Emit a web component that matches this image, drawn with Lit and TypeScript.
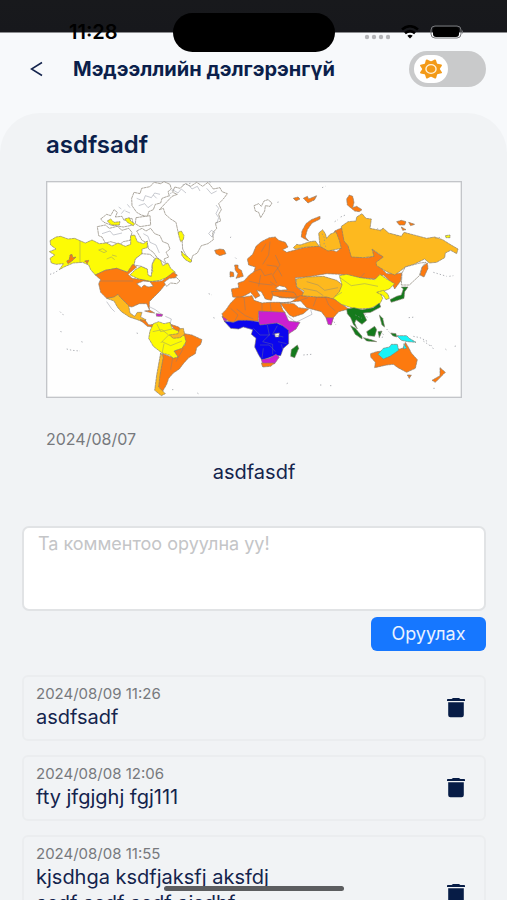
import { LitElement, html, css, svg } from "lit";
import { customElement, property } from "lit/decorators.js";

type Land = [fill: string, points: string];

const ORANGE = "#fd7a0f";
const GOLD = "#fdb91f";
const YELLOW = "#fdfb05";
const PURPLE = "#cb1fd0";
const BLUE = "#0b06ee";
const GREEN = "#147a1c";
const CYAN = "#17f3f6";
const WHITE = "#ffffff";

const lands: Land[] = [
  // Arctic islands and Greenland
  [WHITE, "275,70 282,52 300,56 305,40 330,35 342,22 362,26 372,20 390,28 394,42 384,50 388,62 366,70 362,84 346,88 340,104 326,110 322,125 304,120 290,112 276,92"],
  [WHITE, "288,128 330,122 332,150 300,155 286,146"],
  [WHITE, "182,132 200,118 212,122 222,104 232,112 226,126 246,124 252,136 276,130 280,150 250,156 212,150 192,142"],
  [WHITE, "172,155 196,150 208,160 232,154 246,166 266,160 276,172 270,196 250,200 240,208 212,200 196,204 186,186 176,182"],
  [WHITE, "290,168 306,160 318,168 332,160 344,176 360,182 368,200 384,206 390,222 378,232 386,246 372,252 380,268 362,256 350,246 340,232 326,222 322,204 306,196 298,182"],
  [WHITE, "358,104 370,100 376,118 392,132 408,142 414,170 426,190 428,222 440,244 452,262 458,242 472,234 484,212 504,206 520,194 518,174 530,160 526,144 542,138 536,118 544,104 536,86 550,72 562,56 546,50 540,38 520,42 504,22 488,34 470,22 452,34 436,26 420,40 404,36 398,52 412,58 396,64"],
  [YELLOW, "202,138 212,132 222,142 240,140 238,150 214,150"],
  [YELLOW, "254,132 268,128 272,138 284,146 280,152 262,142"],
  [YELLOW, "414,172 424,168 432,182 430,194 422,200 418,188"],
  [YELLOW, "424,228 432,238 444,246 456,258 450,262 436,254 426,242"],
  // North America
  [YELLOW, "30,197 48,186 62,184 84,192 104,190 120,197 136,204 156,195 178,206 200,204 216,213 234,204 256,214 272,208 272,182 284,180 292,200 310,206 322,198 322,218 306,222 306,238 288,250 284,266 264,292 230,280 196,286 166,300 152,284 146,270 128,262 100,264 72,276 58,284 70,266 48,268 34,264 30,250 44,240 28,230 48,222 32,210"],
  [YELLOW, "270,300 286,284 304,274 322,282 330,304 338,290 336,268 348,248 362,256 368,272 384,264 392,280 406,292 384,306 360,316 330,320 296,312"],
  [WHITE, "286,252 306,236 330,238 344,250 336,268 334,304 324,300 322,282 304,274 282,270"],
  [ORANGE, "166,300 196,286 230,280 262,292 278,268 290,276 264,298 276,310 306,314 336,320 366,318 400,292 412,300 400,316 376,328 360,348 342,366 328,380 328,404 320,386 298,386 276,396 266,394 252,378 234,368 200,370 182,352 176,326 182,314"],
  [ORANGE, "80,258 88,254 90,240 96,238 98,248 108,246 96,258 84,266"],
  [ORANGE, "134,258 146,256 142,266"],
  [WHITE, "290,326 310,318 330,320 340,334 324,336 312,330 304,338"],
  [GOLD, "200,370 222,366 234,358 240,366 266,392 270,414 284,424 292,412 306,412 302,426 318,434 312,442 292,434 268,426 244,410 232,396 222,378"],
  [ORANGE, "300,434 316,436 326,450 342,448 338,456 322,454"],
  [ORANGE, "314,408 330,406 344,414 328,412"],
  [PURPLE, "348,416 368,418 366,424 350,424"],
  [WHITE, "372,322 388,310 410,308 420,318 410,326 392,324 380,334"],
  // South America
  [ORANGE, "392,448 416,456 434,476 456,480 486,494 482,508 470,518 466,536 446,548 430,566 418,582 400,594 386,610 380,628 366,652 352,640 360,590 368,536 400,548 414,546 402,528 436,510"],
  [YELLOW, "340,446 356,440 372,446 390,442 396,460 420,470 434,484 438,500 426,520 402,528 414,546 400,550 388,540 366,534 340,514 326,490 330,468"],
  [GOLD, "388,480 414,476 418,462 430,460 434,478 420,488 400,490"],
  [GOLD, "362,534 370,546 360,600 356,636 376,656 364,662 344,646 350,600"],
  // Northern islands
  [ORANGE, "524,226 540,222 552,224 558,236 540,242 528,236"],
  [WHITE, "642,92 656,86 664,94 672,78 684,74 696,84 690,94 676,92 674,108 662,128 656,112 646,108"],
  [ORANGE, "760,70 774,66 780,72 768,78"],
  [ORANGE, "790,70 802,64 806,72 830,62 824,74 804,84"],
  [ORANGE, "784,186 786,168 798,146 814,134 840,124 840,132 816,144 802,164 796,186 806,198"],
  [ORANGE, "920,72 928,60 938,64 942,82 938,98 950,94 966,104 958,110 944,108 922,90"],
  [ORANGE, "1070,140 1084,136 1098,140 1094,150 1078,150"],
  [ORANGE, "1106,142 1124,148 1112,152"],
  [ORANGE, "1084,156 1098,164 1088,166"],
  [YELLOW, "1216,182 1230,180 1230,188 1218,188"],
  // Europe and Russia
  [ORANGE, "570,290 580,292 582,304 570,306"],
  [ORANGE, "584,270 594,270 594,280 604,286 610,304 588,310 594,296 586,286"],
  [ORANGE, "574,342 596,338 594,324 612,318 628,300 642,290 646,276 626,270 622,252 638,238 648,214 664,200 688,188 706,186 716,196 736,202 744,216 728,224 740,232 762,226 790,218 832,212 890,230 900,222 886,200 884,168 906,158 918,190 926,214 936,244 980,248 1000,244 996,222 1020,240 1032,242 1010,266 1040,296 1070,296 1086,294 1082,318 1064,342 1056,324 1030,300 1006,312 960,308 900,298 860,296 800,306 766,308 770,336 788,350 800,370 760,370 720,368 700,358 694,376 676,372 664,350 650,346 660,362 646,370 632,352 618,360 600,368 578,366"],
  [WHITE, "706,340 718,332 736,336 742,344 720,346"],
  [ORANGE, "694,350 724,348 762,352 772,366 740,368 700,362"],
  [GOLD, "760,218 770,208 780,210 810,200 826,198 838,214 800,216 766,222"],
  [GOLD, "836,174 848,164 856,176 860,190 870,178 888,170 898,196 904,220 864,228 840,214"],
  [GOLD, "904,154 924,140 948,138 950,126 966,116 978,130 994,132 990,160 1020,166 1030,160 1046,174 1084,184 1092,172 1130,182 1160,190 1184,186 1208,194 1230,208 1254,222 1250,236 1232,226 1216,234 1214,248 1190,262 1168,264 1154,252 1122,268 1096,276 1078,290 1064,300 1040,290 1010,272 1008,262 1030,246 996,222 1002,244 970,248 934,246 924,212 912,198"],
  [ORANGE, "1140,300 1146,276 1162,264 1164,280 1152,306"],
  [WHITE, "1086,294 1096,276 1140,264 1158,262 1146,276 1138,302 1108,330 1084,330"],
  // Asia
  [ORANGE, "718,384 752,382 780,362 840,366 880,366 912,392 926,402 896,410 880,428 872,450 858,428 844,410 800,398 782,378"],
  [ORANGE, "720,384 762,386 776,398 806,402 790,416 760,426 748,420 734,402"],
  [GOLD, "768,312 800,306 850,304 890,316 908,330 900,350 894,376 860,366 830,366 786,362 792,348 770,336"],
  [YELLOW, "898,302 920,298 960,308 1004,314 1020,298 1040,312 1064,326 1048,342 1020,352 1028,370 1020,386 992,400 946,402 904,388 880,370 898,350 906,330"],
  [YELLOW, "1010,352 1030,346 1044,358 1048,370 1038,374 1030,362"],
  [PURPLE, "858,428 880,428 874,450 864,448"],
  [GREEN, "920,402 942,398 966,404 1000,398 1018,384 1022,396 992,412 970,414 980,436 966,448 948,434 944,444 952,462 940,448 932,428 922,416"],
  [GREEN, "932,452 946,460 966,484 966,492 946,478"],
  [GREEN, "970,488 994,494 1010,500 980,498"],
  [GREEN, "980,470 1004,454 1010,464 1004,484 984,482"],
  [GREEN, "1018,420 1028,430 1034,456 1026,450"],
  [GREEN, "1014,470 1026,468 1018,488"],
  [GREEN, "1050,374 1070,364 1084,360 1090,342 1084,336 1104,336 1094,350 1092,370 1054,382"],
  [GREEN, "1052,474 1068,476 1070,486 1058,482"],
  [CYAN, "1070,482 1100,482 1108,490 1128,502 1104,500 1084,496"],
  // Africa
  [ORANGE, "550,430 546,416 558,404 572,384 590,366 612,366 636,362 642,376 666,384 690,382 720,382 728,404 736,414 732,414 656,410 654,438 620,438 572,442"],
  [PURPLE, "656,408 734,412 746,438 780,442 768,462 744,478 730,454 714,444 690,450 656,450"],
  [PURPLE, "546,424 562,434 554,440"],
  [BLUE, "552,438 580,442 596,436 624,436 656,440 660,450 710,444 728,452 746,466 746,506 730,520 722,542 704,542 666,556 656,540 644,516 648,490 634,478 638,464 610,456 596,462 572,460"],
  [WHITE, "704,476 718,474 716,486 706,486"],
  [PURPLE, "664,554 688,550 708,538 718,546 704,566 668,566"],
  [ORANGE, "664,564 704,564 692,574 668,576"],
  [GREEN, "754,524 772,510 776,520 764,548 752,544"],
  // Oceania
  [ORANGE, "992,536 1010,530 1050,526 1080,522 1092,518 1096,502 1106,518 1114,534 1132,554 1126,580 1100,592 1074,578 1060,568 1040,570 1004,578 1006,562 992,546"],
  [CYAN, "1014,538 1030,520 1048,516 1054,508 1072,508 1076,526 1050,544 1030,552"],
  [CYAN, "1090,522 1092,506 1100,520"],
  [ORANGE, "1102,600 1114,600 1108,610"],
  [ORANGE, "1200,578 1216,592 1186,622 1176,616 1200,602"],
];

// Borders, lakes and rivers
const borders = [
  "M120,197V262", "M178,318H280", "M176,225l12,-4 12,8 -8,4z", "M200,252l14,-6 10,8M216,240l14,4",
  "M290,70l20,8 6,-16 18,6 10,-14 16,4M296,92l18,-6 10,12 14,-10M340,60l10,10",
  "M244,116l10,-12M236,96l8,6M256,108l14,6M262,88l8,10M186,176l24,-8 10,12 26,-6M310,176l14,8 6,18 18,8 10,24",
  "M398,44l16,10 10,-12 14,12M446,30l10,12 16,-8 8,14M500,40l14,16 16,-8M528,90l8,10 -8,16 8,12 -6,18M506,176l8,-10 10,6 -8,14z",
  "M200,380l14,20 10,10M330,396l16,8 16,12M376,424l18,8 -4,16", "M338,470l28,-6 20,16 -24,24M366,500l26,12 34,-14M350,446l12,24 34,-8M372,506l-6,30M398,548l-6,36M430,520l-22,40",
  "M640,290l22,-8 12,20 22,-6M664,230l14,-24M690,200l-4,40 -18,28M706,240l14,30 -22,30 12,24M662,300l-6,34M680,270l30,4 16,30M626,318l32,8 40,4M690,320l20,14",
  "M590,402l26,20 24,10M612,366l4,40M666,384v30M690,382l4,28M572,400l22,20 -12,22",
  "M682,450l6,30 -20,20 30,8v30M712,452l-14,26 32,8M660,510h28l18,20M640,460l20,20h30M670,520l-4,30M714,500l26,6",
  "M724,508l4,14M800,320l34,10 20,16 40,-8M790,340l40,8 20,14M830,366l-10,28M856,366l10,24 20,18M780,376l24,-8",
  "M900,308l34,24 40,-6 40,8M960,308l14,-14M906,352l-20,12M736,418l32,24 48,-24 -4,-14",
];

// Scattered islets
const islets = [
  "M882,440l6,10M974,416l10,14M946,420l20,10M1020,470l10,8 -4,12M1040,462l8,10M1120,484l20,4 24,12M1172,510l10,14M1216,522l8,6M1244,514l8,-2M1150,498l20,14M1106,428l20,-2M1180,292l20,6 20,6M1228,304l12,-2",
  "M884,140l10,-6M902,126l14,-6M1012,160l10,8 8,-10M1070,184l6,-8M1186,190l20,-4M846,176l8,14 -2,20 10,8",
  "M30,298l12,-4 10,-6M570,188l6,-4M586,248l4,4M712,82l8,-2M508,20l6,4M60,410l8,8 4,2M62,468l2,4M124,500l6,2M80,522l16,4 24,2M290,474l6,2M396,644h8M472,654l6,4M520,428l6,2M506,356l10,4M870,632h8M1180,640h8M740,626l4,-2M790,540l24,-2M840,630h6",
  "M820,78l8,-16M846,38l10,-4M428,30l26,-6M398,44l-10,20M1106,608l8,2",
];

@customElement("world-map")
class WorldMap extends LitElement {
  static styles = css`
    :host { display: block; }
    svg { display: block; width: 100%; height: auto; }
    .sea { fill: #fefefe; stroke: #c3c5c9; stroke-width: 4; }
    .land { stroke: #857d70; stroke-width: 2; stroke-linejoin: round; stroke-dasharray: 9 1; }
    .border { fill: none; stroke: #777c8a; stroke-width: 2; opacity: 0.6; }
    .islet { fill: none; stroke: #8b8f96; stroke-width: 3; stroke-dasharray: 4 6; opacity: 0.7; }
  `;
  render() {
    return html`<svg viewBox="18 18 1248 651" role="img" aria-label="World map">
      <rect class="sea" x="20" y="20" width="1244" height="647"></rect>
      ${lands.map(([fill, points]) => svg`<polygon class="land" fill=${fill} points=${points}></polygon>`)}
      ${borders.map((d) => svg`<path class="border" d=${d}></path>`)}
      ${islets.map((d) => svg`<path class="islet" d=${d}></path>`)}
    </svg>`;
  }
}

@customElement("comment-card")
class CommentCard extends LitElement {
  @property() date = "";
  @property() text = "";
  static styles = css`
    :host {
      display: flex; align-items: center; justify-content: space-between; gap: 16px;
      padding: 7px 16px 9px 12px; border: 2px solid #ebedef; border-radius: 6px;
    }
    .body { max-width: 260px; }
    time { display: block; font-size: 15px; line-height: 20px; color: #77797d; }
    p { margin: 0; font-size: 20px; line-height: 26px; color: #14244d; white-space: pre-wrap; }
    button { display: block; border: 0; padding: 0; background: none; width: 24px; height: 24px; }
    svg { display: block; }
  `;
  render() {
    return html`
      <div class="body"><time>${this.date}</time><p>${this.text}</p></div>
      <button aria-label="Устгах">
        <svg width="24" height="24" viewBox="0 0 24 24" fill="#071c46">
          <path d="M3 4.700Q3 4 3.800 4H7.600L9 3h6l1.400 1H20.200Q21 4 21 4.700V6H3z"></path>
          <path d="M4.200 7.200H19.800V20Q19.800 22.200 17.600 22.200H6.400Q4.200 22.200 4.200 20z"></path>
        </svg>
      </button>`;
  }
}

const comments = [
  { date: "2024/08/09 11:26", text: "asdfsadf" },
  { date: "2024/08/08 12:06", text: "fty jfgjghj fgj111" },
  { date: "2024/08/08 11:55", text: "kjsdhga ksdfjaksfj aksfdj asdf asdf asdf ajsdhf\n\n" },
];

const rays = Array.from({ length: 8 }, (_, i) => i * 45);

@customElement("app-root")
class AppRoot extends LitElement {
  static styles = css`
    :host {
      display: block; position: relative; height: 100vh; overflow: hidden;
      background: #f7f9fb; color: #0b1f4b; font-family: Inter, "Noto Sans", sans-serif;
    }
    .scroll { height: 100%; overflow-y: auto; scrollbar-width: none; }
    .strip { height: 33px; background: linear-gradient(#18191c, #17181c); border-bottom: 1px solid #8b8c8f; box-sizing: border-box; }
    .status {
      position: absolute; inset: 12px 0 auto 0; display: grid; align-items: center;
      grid-template-columns: 1fr 162px 1fr; height: 40px; z-index: 1; color: #000;
    }
    .clock { font-size: 20px; line-height: 24px; font-weight: 600; padding-left: 14px; text-align: center; }
    .island { height: 39px; border-radius: 20px; background: #000; }
    .signals { display: flex; align-items: center; gap: 11px; padding-left: 29px; }
    .dots { margin-top: 9px; }
    header { display: flex; align-items: center; height: 71px; padding: 0 21px 0 24px; }
    .back { border: 0; background: none; padding: 0; width: 26px; height: 32px; }
    .back svg, .signals svg, .knob svg { display: block; }
    h1 { flex: 1; margin: 0 0 0 23px; font-size: 20px; line-height: 28px; font-weight: 700; white-space: nowrap; }
    .toggle { position: relative; display: block; width: 77px; height: 36px; border-radius: 18px; background: #c9cacb; }
    .toggle input { position: absolute; inset: 0; margin: 0; width: 100%; height: 100%; opacity: 0; }
    .knob { width: 34px; height: 28px; border-radius: 17px; background: #fff; margin: 4px 5px; display: inline-flex; align-items: center; justify-content: center; }
    main { margin-top: 9px; padding: 16px 21px 24px 22px; background: #f1f3f5; border-radius: 40px 40px 0 0; }
    article { padding: 0 24px; display: flex; flex-direction: column; }
    h2 { margin: 0 0 20px; font-size: 24px; line-height: 32px; font-weight: 600; }
    .date { font-size: 16px; line-height: 20px; color: #77797d; margin-top: 31px; }
    .text { margin: 10px 0 0; font-size: 20px; line-height: 26px; text-align: center; color: #14244d; }
    form { display: flex; flex-direction: column; align-items: flex-end; gap: 6px; margin: 41px 0 24px; }
    textarea {
      box-sizing: border-box; width: 100%; height: 85px; resize: none; border: 2px solid #e1e3e5;
      border-radius: 7px; background: #fff; padding: 6px 14px; font: 18px/20px Inter, "Noto Sans", sans-serif; color: #14244d;
    }
    textarea::placeholder { color: #c4c5c7; opacity: 1; }
    .send { width: 115px; height: 34px; border: 0; border-radius: 6px; background: #1677ff; color: #e9f2ff; font: 18px/24px Inter, "Noto Sans", sans-serif; padding: 0; }
    .list { display: flex; flex-direction: column; gap: 14px; }
    .home { position: absolute; left: 0; right: 0; bottom: 9px; margin: 0 auto; width: 180px; height: 5px; border-radius: 3px; background: #5c5d5f; }
  `;

  render() {
    return html`
      <div class="status">
        <span class="clock">11:28</span>
        <span class="island"></span>
        <span class="signals">
          <svg class="dots" width="26" height="6" viewBox="0 0 26 6" fill="#b4b5b8">
            <circle cx="3" cy="3" r="2.200"></circle><circle cx="10" cy="3" r="2.200"></circle>
            <circle cx="17" cy="3" r="2.200"></circle><circle cx="24" cy="3" r="2.200"></circle>
          </svg>
          <svg width="18" height="14" viewBox="0 0 18 14" fill="none" stroke="#000" stroke-width="2.600">
            <path d="M1 4.500Q9 -2 17 4.500"></path><path d="M4 8.300Q9 4 14 8.300"></path>
            <path d="M9 13.500L6.300 10.800Q9 8.600 11.700 10.800z" fill="#000" stroke="none"></path>
          </svg>
          <svg width="34" height="14" viewBox="0 0 34 14">
            <rect x="1" y="1" width="30" height="12" rx="4" fill="none" stroke="#77787b"></rect>
            <rect x="3" y="2" width="26" height="10" rx="3"></rect><path d="M32 5q2 2 0 4z" fill="#77787b"></path>
          </svg>
        </span>
      </div>
      <div class="scroll">
        <div class="strip"></div>
        <header>
          <button class="back" aria-label="Буцах">
            <svg width="26" height="32" viewBox="0 0 26 32" fill="none" stroke="#14244d" stroke-width="1.500"><path d="M18 9.500L7.500 16L18 22.500"></path></svg>
          </button>
          <h1>Мэдээллийн дэлгэрэнгүй</h1>
          <label class="toggle">
            <input type="checkbox" aria-label="Өдөр / шөнө" />
            <span class="knob">
              <svg width="26" height="22" viewBox="-13 -11 26 22">
                <g transform="scale(1.150 1)">
                  ${rays.map((a) => svg`<path d="M-4 -5.500L-.6 -10Q0 -10.600 .6 -10L4 -5.500z" fill="#f39a17" transform="rotate(${a + 22})"></path>`)}
                  <circle r="7.200" fill="#f39a17"></circle>
                  <circle r="4.400" fill="none" stroke="#fff1d8" stroke-width="1.200"></circle>
                </g>
              </svg>
            </span>
          </label>
        </header>
        <main>
          <article>
            <h2>asdfsadf</h2>
            <world-map></world-map>
            <time class="date">2024/08/07</time>
            <p class="text">asdfasdf</p>
          </article>
          <form @submit=${(e: Event) => e.preventDefault()}>
            <textarea aria-label="Коммент" placeholder="Та комментоо оруулна уу!"></textarea>
            <button class="send">Оруулах</button>
          </form>
          <div class="list">
            ${comments.map((c) => html`<comment-card .date=${c.date} .text=${c.text}></comment-card>`)}
          </div>
        </main>
      </div>
      <div class="home"></div>
    `;
  }
}
